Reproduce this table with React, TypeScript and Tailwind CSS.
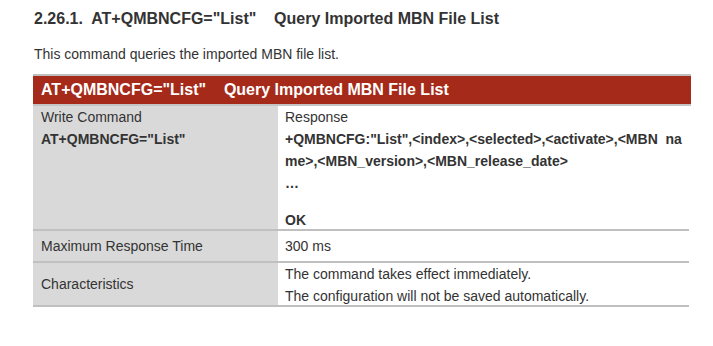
export default function App() {
  const font = { fontFamily: '"Liberation Sans", Arial, sans-serif' };
  return (
    <div className="w-[713px] h-[346px] bg-white text-[#333333]" style={font}>
      <div className="pl-[33px] pt-[9px]">
        <h3 className="text-[16px] leading-[19px] font-bold whitespace-pre text-[#333333] pl-[1px]">
          {'2.26.1.  AT+QMBNCFG="List"    Query Imported MBN File List'}
        </h3>
        <p className="mt-[18px] text-[14px] leading-[17px] pl-[1px]">
          This command queries the imported MBN file list.
        </p>
        <div className="mt-[11px] w-[658px] text-[14px]">
          <div className="border-t-2 border-[#bfbfbf] bg-[#a62a19] h-[32px] flex items-center pl-[8px] border-b-2 border-b-[#c4c4c4]">
            <span className="text-white font-bold text-[16px] whitespace-pre">
              {'AT+QMBNCFG="List"    Query Imported MBN File List'}
            </span>
          </div>
          <div className="flex border-b-2 border-[#c0c0c0] w-[656px] h-[125px]">
            <div className="w-[245px] bg-[#d9d9d9] pl-[8px]">
              <div className="leading-[22px]">Write Command</div>
              <div className="leading-[22px] font-bold">AT+QMBNCFG="List"</div>
            </div>
            <div className="flex-1 pl-[7px]">
              <div className="leading-[22px]">Response</div>
              <div className="leading-[22px] font-bold whitespace-pre">
                {'+QMBNCFG:"List",<index>,<selected>,<activate>,<MBN  na'}
              </div>
              <div className="leading-[22px] font-bold">
                {'me>,<MBN_version>,<MBN_release_date>'}
              </div>
              <div className="leading-[22px] font-bold">…</div>
              <div className="h-[15px]" />
              <div className="leading-[22px] font-bold">OK</div>
            </div>
          </div>
          <div className="flex border-b-2 border-[#c0c0c0] w-[656px] h-[32px]">
            <div className="w-[245px] bg-[#d9d9d9] pl-[8px] flex items-center">
              Maximum Response Time
            </div>
            <div className="flex-1 pl-[7px] flex items-center">300 ms</div>
          </div>
          <div className="flex border-b-2 border-[#c0c0c0] w-[656px] h-[44px]">
            <div className="w-[245px] bg-[#d9d9d9] pl-[8px] flex items-center">
              Characteristics
            </div>
            <div className="flex-1 pl-[7px]">
              <div className="leading-[22px]">The command takes effect immediately.</div>
              <div className="leading-[22px]">The configuration will not be saved automatically.</div>
            </div>
          </div>
        </div>
      </div>
    </div>
  );
}
